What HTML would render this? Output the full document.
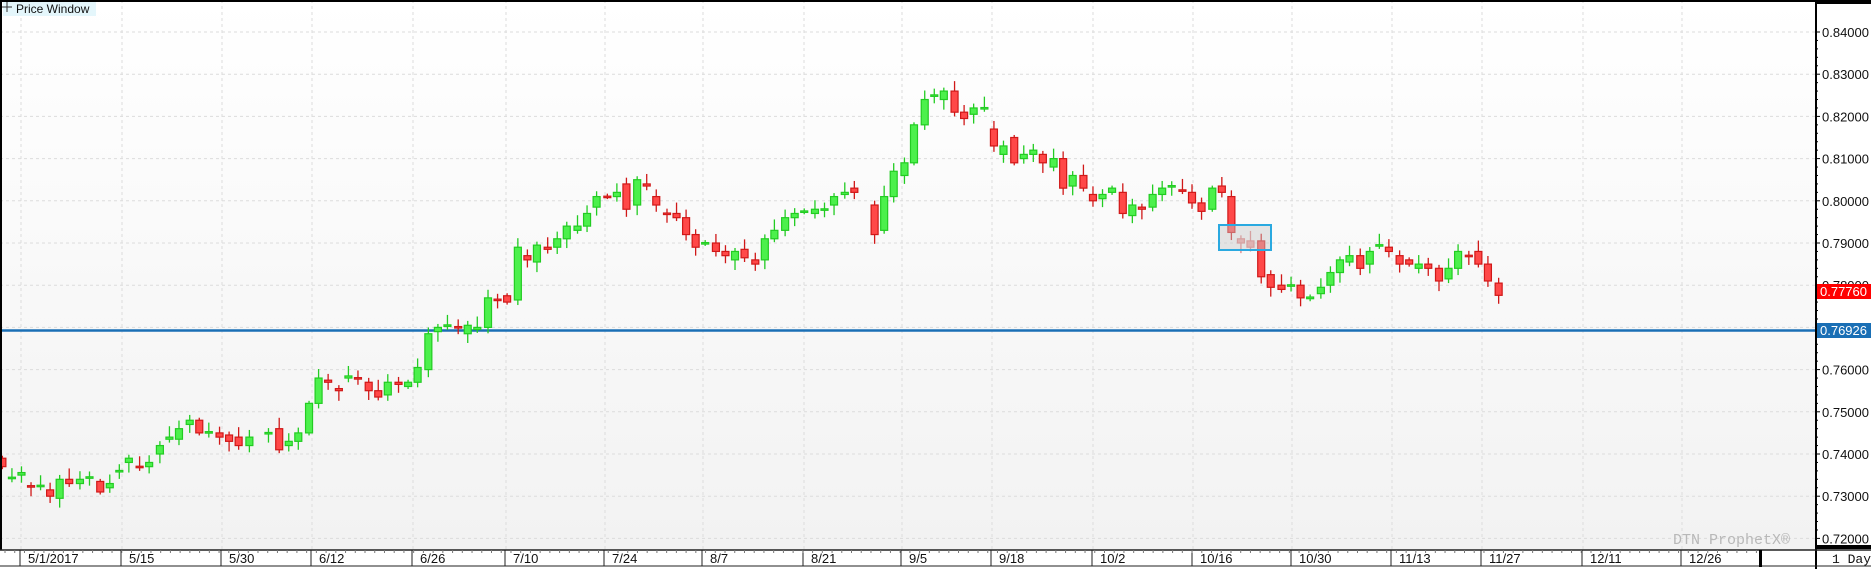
<!DOCTYPE html>
<html><head><meta charset="utf-8"><style>
html,body{margin:0;padding:0;width:1871px;height:569px;overflow:hidden;background:#fff;font-family:"Liberation Sans",sans-serif}
svg{display:block}
</style></head><body>
<svg id="s" width="1871" height="569" viewBox="0 0 1871 569" xmlns="http://www.w3.org/2000/svg">
<defs><linearGradient id="bg" x1="0" y1="0" x2="0" y2="1"><stop offset="0" stop-color="#ffffff"/><stop offset="1" stop-color="#f2f2f2"/></linearGradient></defs>
<rect x="0" y="0" width="1816" height="550" fill="url(#bg)"/>
<g id="grid" stroke="#dcdcdc" stroke-width="1" stroke-dasharray="3,3"></g>
<line x1="0" y1="330.5" x2="1816" y2="330.5" stroke="#1a6fb5" stroke-width="2.5"/>
<g id="candles"></g>
<rect x="1219" y="225" width="52" height="25" fill="rgba(200,200,200,0.45)" stroke="#2aa9e0" stroke-width="2"/>
<rect x="0" y="0" width="1816" height="2" fill="#000"/>
<rect x="0" y="0" width="2" height="550" fill="#000"/>
<rect x="1816" y="0" width="55" height="4" fill="#000"/>
<rect x="1815" y="0" width="2" height="569" fill="#000"/>
<rect x="1817" y="545" width="54" height="4" fill="#000"/>
<rect x="3" y="2" width="93" height="14" fill="#e4f6fb"/>
<text x="16" y="13" font-size="12" fill="#111">Price Window</text>
<path d="M2 7h10M7 2v10" stroke="#333" stroke-width="1"/>
<g id="axis" font-size="13" fill="#111"></g>
<rect x="1817" y="284" width="54" height="15" fill="#ff0000"/>
<text x="1820" y="296" font-size="13" fill="#fff">0.77760</text>
<rect x="1817" y="323" width="54" height="15" fill="#1a6fb5"/>
<text x="1820" y="335" font-size="13" fill="#fff">0.76926</text>
<text x="1673" y="544" font-size="15" fill="#b8b8b8" font-family="Liberation Mono,monospace">DTN ProphetX®</text>
<rect x="0" y="550" width="1815" height="19" fill="#fff"/>
<line x1="0" y1="550" x2="1871" y2="550" stroke="#222" stroke-width="1.5"/>
<line x1="0" y1="566" x2="1871" y2="566" stroke="#222" stroke-width="1"/>
<g id="dates" font-size="13" fill="#111"></g>
<rect x="1759" y="550" width="3" height="17" fill="#000"/>
<text x="1832" y="563" font-size="13" font-family="Liberation Mono,monospace" fill="#111">1 Day</text>
</svg>
<script>
var NS="http://www.w3.org/2000/svg";
function el(p,t,a){var e=document.createElementNS(NS,t);for(var k in a)e.setAttribute(k,a[k]);p.appendChild(e);return e;}
function Y(p){return 32+(0.84-p)*4220;}
var g=document.getElementById('grid'),ax=document.getElementById('axis');
for(var i=0;i<=12;i++){var p=0.84-i*0.01,y=Y(p);
 el(g,'line',{x1:0,y1:y,x2:1816,y2:y});
 el(ax,'line',{x1:1815,y1:y,x2:1820,y2:y,stroke:'#000'});
 var t=el(ax,'text',{x:1822,y:y+5});t.textContent=p.toFixed(5);
 for(var j=1;j<5;j++){if(i<12)el(ax,'line',{x1:1815,y1:y+j*8.44,x2:1818,y2:y+j*8.44,stroke:'#000'});}
}
var seps=[20,121,221,311,412,505,604,702,803,901,991,1092,1192,1291,1391,1481,1582,1681];
var labs=['5/1/2017','5/15','5/30','6/12','6/26','7/10','7/24','8/7','8/21','9/5','9/18','10/2','10/16','10/30','11/13','11/27','12/11','12/26'];
var d=document.getElementById('dates');
seps.forEach(function(x,i){el(g,'line',{x1:x+1,y1:0,x2:x+1,y2:550});
 el(d,'line',{x1:x,y1:550,x2:x,y2:566,stroke:'#222'});
 var t=el(d,'text',{x:x+8,y:563});t.textContent=labs[i];});
for(var x=5;x<1760;x+=9.73){el(d,'line',{x1:x,y1:550,x2:x,y2:553,stroke:'#777'});}
// [viewX, open, close]
var D=[[2,.739,.737],[10,.7345,.7345],[18,.735,.7356],[26,.7325,.7324],[34,.7324,.7326],[42,.7315,.730],[50,.7295,.734],[58,.734,.733],[67,.733,.734],[75,.7345,.7346],[84,.7335,.731],[92,.732,.733],[100,.7359,.7361],[108,.738,.739],[117,.7371,.737],[125,.737,.738],[134,.740,.742],[142,.7435,.744],[150,.7435,.746],[159,.747,.748],[167,.748,.745],[175,.7451,.7453],[184,.745,.744],[192,.7445,.743],[200,.744,.742],[209,.742,.744],[225,.7449,.7451],[234,.746,.741],[242,.742,.743],[250,.743,.745],[259,.745,.752],[267,.752,.758],[275,.7575,.757],[284,.7555,.755],[292,.758,.7585],[300,.7581,.758],[309,.757,.755],[317,.755,.7535],[325,.754,.757],[334,.757,.7565],[342,.756,.757],[350,.757,.7605],[359,.760,.7685],[367,.769,.770],[375,.7704,.7706],[384,.7702,.770],[392,.7685,.7705],[400,.7695,.770],[409,.770,.777],[417,.7767,.7765],[425,.7775,.776],[434,.7765,.789],[442,.787,.786],[450,.7855,.7895],[459,.789,.7885],[467,.789,.791],[475,.791,.794],[484,.793,.794],[492,.794,.797],[500,.7985,.801],[509,.8011,.801],[517,.801,.802],[525,.804,.798],[534,.799,.805],[542,.804,.8035],[550,.801,.799],[559,.7971,.797],[567,.797,.796],[575,.796,.792],[583,.792,.789],[591,.7899,.7901],[600,.790,.788],[608,.788,.787],[616,.786,.788],[624,.7885,.7865],[633,.786,.785],[641,.786,.791],[649,.791,.793],[658,.793,.796],[666,.796,.797],[674,.7974,.7976],[683,.797,.798],[691,.7979,.7981],[699,.799,.801],[708,.8015,.802],[716,.803,.802],[733,.799,.792],[741,.793,.801],[749,.801,.807],[758,.806,.809],[766,.809,.818],[775,.818,.824],[783,.8249,.8251],[791,.824,.826],[800,.826,.821],[808,.821,.8195],[816,.8205,.822],[825,.8219,.8221],[833,.817,.813],[841,.811,.813],[850,.815,.809],[858,.810,.811],[866,.811,.812],[874,.811,.809],[883,.808,.810],[891,.810,.803],[899,.8035,.806],[908,.806,.803],[916,.8015,.800],[924,.8005,.8015],[932,.802,.803],[941,.802,.797],[949,.7965,.799],[957,.7985,.798],[966,.7985,.8015],[974,.8015,.803],[982,.8034,.8036],[991,.8026,.8024],[999,.802,.7995],[1007,.7995,.7975],[1016,.798,.803],[1024,.8035,.802],[1032,.801,.7925],[1040,.791,.790,1],[1048,.7905,.789,1],[1057,.7905,.782],[1065,.7825,.7795],[1074,.780,.779],[1082,.7799,.7801],[1090,.780,.777],[1098,.7768,.7772],[1107,.778,.7795],[1115,.780,.783],[1123,.783,.786],[1131,.7855,.787],[1140,.787,.784],[1148,.785,.788],[1156,.7894,.7896],[1164,.789,.788],[1173,.787,.785],[1181,.786,.785],[1189,.784,.785],[1197,.785,.784],[1206,.784,.781],[1214,.7815,.784],[1222,.784,.788],[1231,.7871,.787],[1239,.788,.785],[1247,.785,.781],[1256,.7805,.7776]];
var c=document.getElementById('candles'),S=1.1932;
D.forEach(function(r,i){var x=r[0]*S,o=r[1],cl=r[2],up=cl>=o,fad=r[3];
 var hi=Math.max(o,cl)+0.0006+((i*37)%10)*0.00022,lo=Math.min(o,cl)-0.0006-((i*53)%10)*0.0002;
 var col=up?'#22cc22':'#d01818',fill=up?'#4cf04c':'#ff4848';
 if(fad){col='#e08080';fill='#f0a0a0';}
 el(c,'line',{x1:x,y1:Y(hi),x2:x,y2:Y(lo),stroke:col,'stroke-width':1.3});
 var y1=Y(Math.max(o,cl)),h=Math.max(Y(Math.min(o,cl))-y1,1.5);
 el(c,'rect',{x:x-3.5,y:y1,width:7,height:h,fill:fill,stroke:col,'stroke-width':1.2});
});
</script>
</body></html>
